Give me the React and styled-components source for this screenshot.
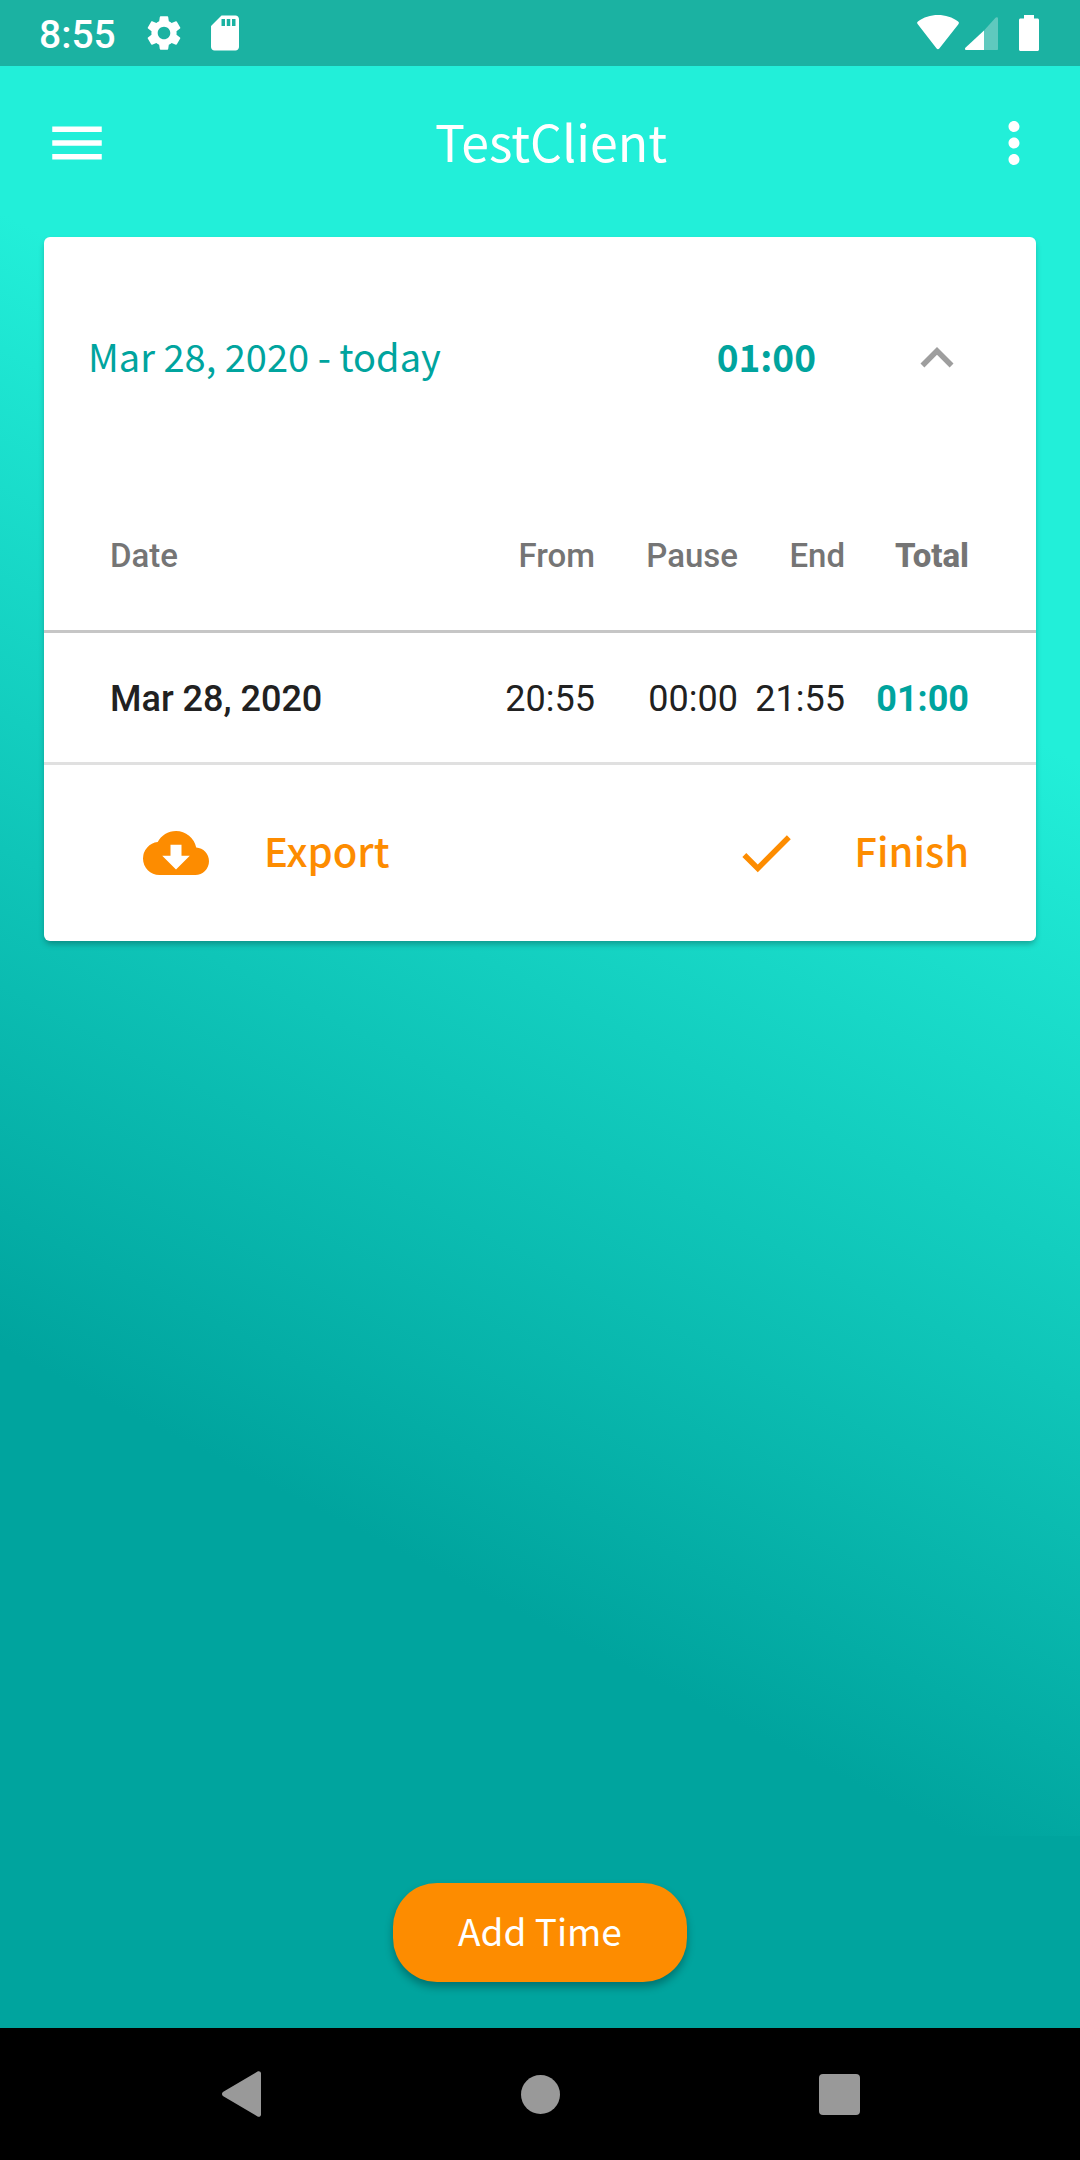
import React, { useState } from "react";
import styled, { createGlobalStyle } from "styled-components";
import {
  MdCheck,
  MdCloudDownload,
  MdExpandLess,
  MdExpandMore,
  MdMenu,
  MdMoreVert,
  MdSdCard,
  MdSettings,
} from "react-icons/md";

const color = {
  light: "#22efd9",
  dark: "#00a49e",
  status: "#1bb2a2",
  accent: "#fd8c00",
  text: "#212121",
  muted: "#757575",
};

const heading = `"Noto Sans CJK SC", "Noto Sans", sans-serif`;
const body = `Roboto, "Noto Sans", sans-serif`;

const GlobalStyle = createGlobalStyle`
  *, *::before, *::after { box-sizing: border-box; }
  body { margin: 0; background: #000; font-family: ${body}; }
  button { margin: 0; padding: 0; border: 0; background: none; color: inherit; font: inherit; cursor: pointer; }
  svg { display: block; flex: none; }
`;

const Screen = styled.div`
  display: flex;
  flex-direction: column;
  min-height: 100vh;
`;

const StatusBar = styled.div`
  display: flex;
  align-items: center;
  justify-content: space-between;
  height: 66px;
  padding: 0 41px 0 39px;
  background: ${color.status};
  color: #fff;
`;

const StatusGroup = styled.div`
  display: flex;
  align-items: center;
  gap: ${(p) => p.$gap}px;
`;

const Clock = styled.time`
  margin-right: 8px;
  padding-top: 3px;
  font-size: 39px;
  font-weight: 500;
  line-height: 46px;
`;

const Page = styled.main`
  flex: 1;
  display: flex;
  flex-direction: column;
  background: linear-gradient(207deg, ${color.light} 30%, ${color.dark} 79%);
`;

const AppBar = styled.header`
  display: grid;
  grid-template-columns: 77px 1fr 66px;
  align-items: center;
  height: 154px;
  padding: 0 33px 0 44px;
  color: #fff;
`;

const IconButton = styled.button`
  display: grid;
  place-items: center;
  width: 66px;
  height: 66px;
`;

const Title = styled.h1`
  margin: 0;
  padding-bottom: 6px;
  font-family: ${heading};
  font-size: 50px;
  font-weight: 400;
  line-height: 66px;
  text-align: center;
`;

const Card = styled.section`
  margin: 17px 44px 0;
  border-radius: 6px;
  background: #fff;
  box-shadow: 0 4px 6px -1px rgba(0, 0, 0, 0.28);
`;

const PeriodToggle = styled.button`
  display: flex;
  align-items: center;
  gap: 88px;
  width: 100%;
  height: 242px;
  padding: 0 66px 0 44px;
  color: ${color.dark};
  font-family: ${heading};
  font-size: 38px;
  line-height: 44px;
  text-align: left;

  svg { color: #9e9e9e; }
`;

const Period = styled.span`
  flex: 1;
  padding-bottom: 4px;
`;

const PeriodTotal = styled.strong`
  padding-bottom: 4px;
  font-weight: 700;
  font-size: 37px;
`;

const Table = styled.table`
  width: 100%;
  border-collapse: separate;
  border-spacing: 0;
  table-layout: fixed;
`;

const Col = styled.col`
  width: ${(p) => (p.$width ? `${p.$width}px` : "auto")};
`;

const HeadCell = styled.th`
  height: 154px;
  padding: 2px 0 0;
  border-bottom: 3px solid #c6c6c6;
  color: ${color.muted};
  font-size: 33px;
  font-weight: ${(p) => (p.$strong ? 800 : 500)};
  line-height: 40px;
  text-align: right;

  &:first-child { padding-left: 66px; text-align: left; }
  &:last-child { padding-right: 67px; }
`;

const Cell = styled.td`
  height: 132px;
  padding: 2px 0 0;
  border-bottom: 3px solid #e0e0e0;
  color: ${(p) => (p.$strong ? color.dark : color.text)};
  font-size: 36px;
  font-weight: ${(p) => (p.$strong ? 700 : 400)};
  line-height: 42px;
  text-align: right;

  &:first-child { padding-left: 66px; font-weight: 500; text-align: left; }
  &:last-child { padding-right: 67px; }
`;

const Actions = styled.div`
  display: flex;
  align-items: center;
  justify-content: space-between;
  height: 176px;
  padding: 0 67px 0 99px;
`;

const ActionButton = styled.button`
  display: flex;
  align-items: center;
  gap: 55px;
  color: ${color.accent};
`;

const ActionLabel = styled.span`
  padding-bottom: 6px;
  font-family: ${heading};
  font-size: 40px;
  font-weight: 500;
  line-height: 60px;
`;

const BottomBar = styled.footer`
  display: grid;
  place-items: center;
  height: 192px;
  background: ${color.dark};
`;

const AddButton = styled.button`
  height: 99px;
  padding: 0 65px 4px;
  border-radius: 44px;
  background: ${color.accent};
  box-shadow: 0 5px 8px rgba(0, 0, 0, 0.3);
  color: #fff;
  font-family: ${heading};
  font-size: 37px;
  font-weight: 400;
  line-height: 44px;
`;

const SystemNav = styled.nav`
  display: flex;
  align-items: center;
  justify-content: center;
  gap: 200px;
  height: 132px;
  background: #000;
  color: #999;
`;

const NavButton = styled.button`
  display: grid;
  place-items: center;
  width: 99px;
  height: 99px;
`;

const Wifi = () => (
  <svg width="42" height="36" viewBox="0 0 42 36" fill="currentColor" aria-hidden="true">
    <path d="M1 9.4C-.2 8.400-.2 7.200.9 6.400 6.500 2.300 13.600 0 21 0s14.500 2.300 20.100 6.400c1.100.8 1.100 2 .1 3L22.300 33.400c-.8 1-1.900 1-2.700 0Z" />
  </svg>
);

const Signal = () => (
  <svg width="33" height="36" viewBox="0 0 33 36" fill="currentColor" aria-hidden="true">
    <path opacity=".3" d="M19 15.500 30.500 2.800c1-1 2.500-.5 2.500.8V34c0 .6-.4 1-1 1H19Z" />
    <path d="M19 15.500V35H1.200c-1.200 0-1.600-1.500-.8-2.300Z" />
  </svg>
);

const Battery = () => (
  <svg width="20" height="36" viewBox="0 0 20 36" fill="currentColor" aria-hidden="true">
    <path d="M5 0h10v3.500h3.500c.8 0 1.500.7 1.500 1.500v29.500c0 .8-.7 1.500-1.500 1.500h-17C.7 36 0 35.300 0 34.500V5c0-.8.7-1.500 1.500-1.500H5Z" />
  </svg>
);

const BackIcon = () => (
  <svg width="39" height="46" viewBox="0 0 39 46" fill="currentColor" aria-hidden="true">
    <path d="M35.500.6C37 -.2 39 .6 39 2.600v40.800c0 2-2 2.800-3.500 2L1.300 25.200c-1.700-1-1.700-3.400 0-4.400Z" />
  </svg>
);

const HomeIcon = () => (
  <svg width="39" height="39" viewBox="0 0 39 39" fill="currentColor" aria-hidden="true">
    <circle cx="19.500" cy="19.500" r="19.500" />
  </svg>
);

const RecentsIcon = () => (
  <svg width="41" height="41" viewBox="0 0 41 41" fill="currentColor" aria-hidden="true">
    <rect width="41" height="41" rx="4" />
  </svg>
);

const entries = [
  { date: "Mar 28, 2020", from: "20:55", pause: "00:00", end: "21:55", total: "01:00" },
];

export default function App() {
  const [open, setOpen] = useState(true);

  return (
    <Screen>
      <GlobalStyle />
      <StatusBar>
        <StatusGroup $gap={19}>
          <Clock>8:55</Clock>
          <MdSettings size={42} />
          <MdSdCard size={42} />
        </StatusGroup>
        <StatusGroup $gap={21}>
          <StatusGroup $gap={6}>
            <Wifi />
            <Signal />
          </StatusGroup>
          <Battery />
        </StatusGroup>
      </StatusBar>

      <Page>
        <AppBar>
          <IconButton aria-label="Open menu">
            <MdMenu size={66} />
          </IconButton>
          <Title>TestClient</Title>
          <IconButton aria-label="More options">
            <MdMoreVert size={66} />
          </IconButton>
        </AppBar>

        <Card>
          <PeriodToggle aria-expanded={open} onClick={() => setOpen(!open)}>
            <Period>Mar 28, 2020 - today</Period>
            <PeriodTotal>01:00</PeriodTotal>
            {open ? <MdExpandLess size={66} /> : <MdExpandMore size={66} />}
          </PeriodToggle>
          {open && (
            <>
              <Table>
                <colgroup>
                  <Col />
                  <Col $width={160} />
                  <Col $width={143} />
                  <Col $width={107} />
                  <Col $width={191} />
                </colgroup>
                <thead>
                  <tr>
                    <HeadCell scope="col">Date</HeadCell>
                    <HeadCell scope="col">From</HeadCell>
                    <HeadCell scope="col">Pause</HeadCell>
                    <HeadCell scope="col">End</HeadCell>
                    <HeadCell scope="col" $strong>Total</HeadCell>
                  </tr>
                </thead>
                <tbody>
                  {entries.map((entry) => (
                    <tr key={entry.date}>
                      <Cell>{entry.date}</Cell>
                      <Cell>{entry.from}</Cell>
                      <Cell>{entry.pause}</Cell>
                      <Cell>{entry.end}</Cell>
                      <Cell $strong>{entry.total}</Cell>
                    </tr>
                  ))}
                </tbody>
              </Table>
              <Actions>
                <ActionButton>
                  <MdCloudDownload size={66} />
                  <ActionLabel>Export</ActionLabel>
                </ActionButton>
                <ActionButton>
                  <MdCheck size={66} />
                  <ActionLabel>Finish</ActionLabel>
                </ActionButton>
              </Actions>
            </>
          )}
        </Card>
      </Page>

      <BottomBar>
        <AddButton>Add Time</AddButton>
      </BottomBar>

      <SystemNav aria-label="System navigation">
        <NavButton aria-label="Back">
          <BackIcon />
        </NavButton>
        <NavButton aria-label="Home">
          <HomeIcon />
        </NavButton>
        <NavButton aria-label="Recent apps">
          <RecentsIcon />
        </NavButton>
      </SystemNav>
    </Screen>
  );
}
